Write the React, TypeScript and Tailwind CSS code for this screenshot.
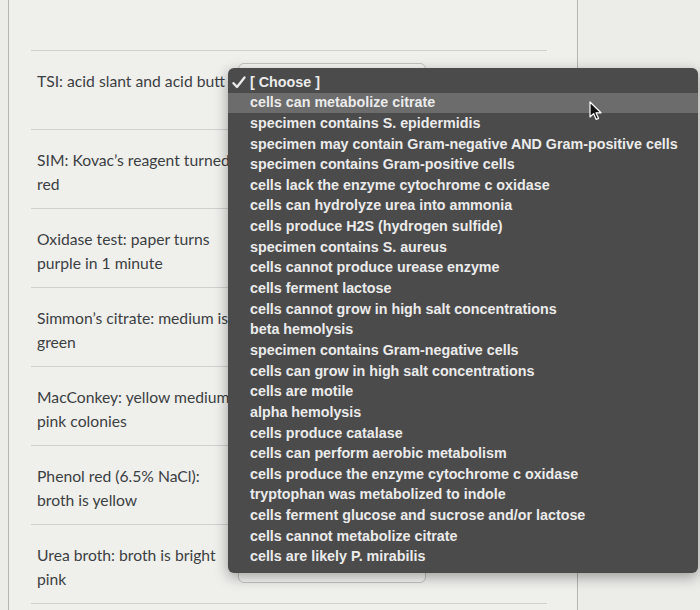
import React from "react";

const rows = [
  ["TSI: acid slant and acid butt"],
  ["SIM: Kovac\u2019s reagent turned", "red"],
  ["Oxidase test: paper turns", "purple in 1 minute"],
  ["Simmon\u2019s citrate: medium is", "green"],
  ["MacConkey: yellow medium,", "pink colonies"],
  ["Phenol red (6.5% NaCl):", "broth is yellow"],
  ["Urea broth: broth is bright", "pink"],
];

const options = [
  "cells can metabolize citrate",
  "specimen contains S. epidermidis",
  "specimen may contain Gram-negative AND Gram-positive cells",
  "specimen contains Gram-positive cells",
  "cells lack the enzyme cytochrome c oxidase",
  "cells can hydrolyze urea into ammonia",
  "cells produce H2S (hydrogen sulfide)",
  "specimen contains S. aureus",
  "cells cannot produce urease enzyme",
  "cells ferment lactose",
  "cells cannot grow in high salt concentrations",
  "beta hemolysis",
  "specimen contains Gram-negative cells",
  "cells can grow in high salt concentrations",
  "cells are motile",
  "alpha hemolysis",
  "cells produce catalase",
  "cells can perform aerobic metabolism",
  "cells produce the enzyme cytochrome c oxidase",
  "tryptophan was metabolized to indole",
  "cells ferment glucose and sucrose and/or lactose",
  "cells cannot metabolize citrate",
  "cells are likely P. mirabilis",
];

export default function App() {
  return (
    <div className="relative w-[700px] h-[610px] overflow-hidden bg-[#ecece9]">
      {/* page */}
      <div className="ml-[8px] w-[570px] h-full border-l border-r border-[#b4b4b2] bg-[#efefec] pt-[50px] pl-[22px] pr-[30px] font-['Lato',sans-serif]">
        <div className="border-b border-[#cfcfcd]">
          {rows.map((lines) => (
            <div key={lines[0]} className="h-[79px] border-t border-[#cfcfcd] flex pl-[6px]">
              <p className="w-[204px] shrink-0 pt-[18px] text-[15.7px] leading-[24px] text-[#3c3f42]">
                {lines.map((l) => (
                  <span key={l} className="block whitespace-nowrap">
                    {l}
                  </span>
                ))}
              </p>
              <div className="ml-[-3px] mt-[12px] w-[188px] h-[46px] rounded-md border border-[#c2c2c0] bg-[#f6f6f4]" />
            </div>
          ))}
        </div>
      </div>

      {/* open select menu */}
      <div className="absolute left-[228px] top-[68px] w-[470px] rounded-[6px] bg-[#4b4b4b] pt-[4px] pb-[6px] shadow-[0_4px_14px_rgba(0,0,0,0.35)] font-['Liberation_Sans',Arial,sans-serif] text-[14.3px] font-bold text-[#ebebeb]">
        <div className="h-[20.65px] flex items-center">
          <span className="w-[22px] pl-[4px] flex items-center">
            <svg width="14" height="13" viewBox="0 0 14 13">
              <path d="M1.5 7.2 L5 11 L12.5 1.5" fill="none" stroke="#ebebeb" strokeWidth="2.3" strokeLinecap="round" strokeLinejoin="round" />
            </svg>
          </span>
          <span>[ Choose ]</span>
        </div>
        {options.map((o, i) => (
          <div
            key={o}
            className={`h-[20.65px] flex items-center pl-[22px] ${i === 0 ? "bg-[#6c6c6c]" : ""}`}
          >
            {o}
          </div>
        ))}
      </div>

      {/* mouse pointer */}
      <svg className="absolute left-[589px] top-[101px]" width="14" height="20" viewBox="0 0 14 20">
        <path
          d="M1 1 L1 16 L4.6 12.6 L7.2 18.4 L9.6 17.4 L7 11.8 L12 11.8 Z"
          fill="#111"
          stroke="#fff"
          strokeWidth="1.2"
          strokeLinejoin="round"
        />
      </svg>
    </div>
  );
}
